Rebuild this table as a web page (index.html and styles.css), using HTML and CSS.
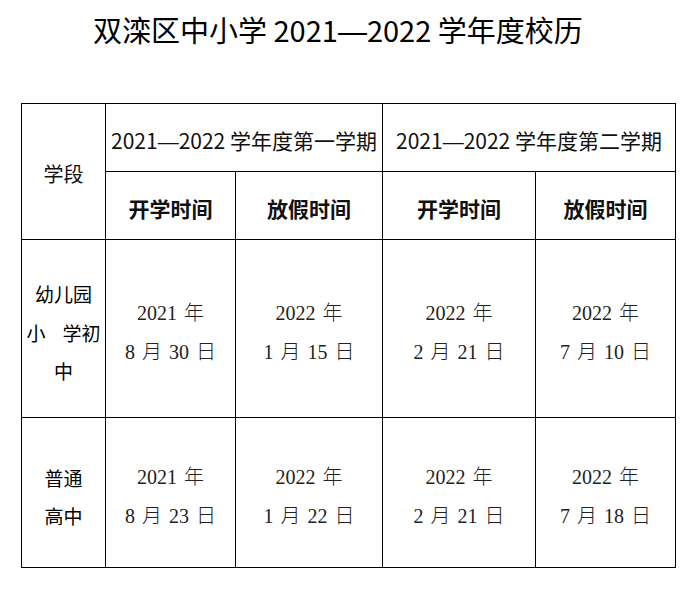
FILE: index.html
```html
<!DOCTYPE html>
<html lang="zh-CN">
<head>
<meta charset="utf-8">
<title>双滦区中小学 2021—2022 学年度校历</title>
<link rel="stylesheet" href="styles.css">
</head>
<body>
<h1 class="title">双滦区中小学 2021<span class="dash">—</span>2022 学年度校历</h1>
<div class="calendar">
  <div class="cell head stage-head">学段</div>
  <div class="cell head term-head term-1"><span class="line">2021<span class="dash">—</span>2022 学年度第一学期</span></div>
  <div class="cell head term-head term-2"><span class="line">2021<span class="dash">—</span>2022 学年度第二学期</span></div>
  <div class="cell head sub-head">开学时间</div>
  <div class="cell head sub-head">放假时间</div>
  <div class="cell head sub-head">开学时间</div>
  <div class="cell head sub-head">放假时间</div>

  <div class="cell stage">
    <span class="line">幼儿园</span>
    <span class="line spread"><span>小</span><span>学初</span></span>
    <span class="line">中</span>
  </div>
  <div class="cell date"><span class="line">2021 年</span><span class="line">8 月 30 日</span></div>
  <div class="cell date"><span class="line">2022 年</span><span class="line">1 月 15 日</span></div>
  <div class="cell date"><span class="line">2022 年</span><span class="line">2 月 21 日</span></div>
  <div class="cell date"><span class="line">2022 年</span><span class="line">7 月 10 日</span></div>

  <div class="cell stage">
    <span class="line">普通</span>
    <span class="line">高中</span>
  </div>
  <div class="cell date"><span class="line">2021 年</span><span class="line">8 月 23 日</span></div>
  <div class="cell date"><span class="line">2022 年</span><span class="line">1 月 22 日</span></div>
  <div class="cell date"><span class="line">2022 年</span><span class="line">2 月 21 日</span></div>
  <div class="cell date"><span class="line">2022 年</span><span class="line">7 月 18 日</span></div>
</div>
</body>
</html>
```
FILE: styles.css
```css
html, body {
  margin: 0;
  padding: 0;
  background: #fff;
}

body {
  font-family: "Noto Sans CJK SC", "Noto Sans", sans-serif;
  color: #111;
}

.title {
  margin: 9px 0 54px 93px;
  height: 40px;
  font-size: 29px;
  line-height: 40px;
  font-weight: normal;
  color: #000;
  white-space: nowrap;
}

.dash {
  font-family: "Liberation Sans", sans-serif;
  line-height: 1;
}

.calendar {
  margin-left: 21px;
  width: 655px;
  box-sizing: border-box;
  padding: 1px;
  background: #000;
  display: grid;
  grid-template-columns: 83px 129px 146px 152px 139px;
  grid-template-rows: 67px 67px 177px 149px;
  gap: 1px;
}

.cell {
  background: #fff;
  display: flex;
  flex-direction: column;
  align-items: center;
  justify-content: center;
  padding-top: 9px;
  box-sizing: border-box;
  text-align: center;
  white-space: nowrap;
  overflow: hidden;
}

.cell.head {
  padding-top: 4px;
}

.stage-head {
  grid-column: 1;
  grid-row: 1 / span 2;
  font-size: 20px;
  color: #111;
}

.term-head {
  font-size: 21px;
  color: #111;
}

.term-1 {
  grid-column: 2 / span 2;
}

.term-2 {
  grid-column: 4 / span 2;
}

.sub-head {
  font-size: 21px;
  font-weight: bold;
  color: #111;
}

.stage {
  font-size: 19px;
  line-height: 38.5px;
  color: #000;
}

.line {
  display: block;
}

.spread {
  display: flex;
  justify-content: space-between;
  width: 74px;
}

.date {
  font-family: "Liberation Serif", "Noto Sans CJK SC", serif;
  font-size: 20px;
  line-height: 39px;
  font-weight: 300;
  word-spacing: 2px;
  color: #222;
}
```
